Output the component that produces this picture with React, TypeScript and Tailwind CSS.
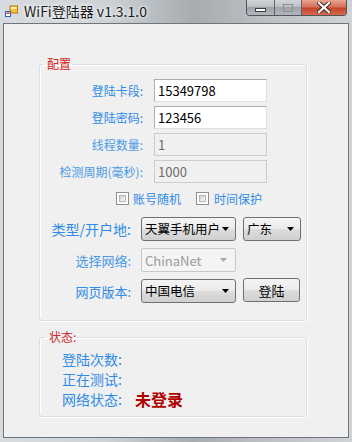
import React from "react";

function TextBox({ value, disabled }: { value: string; disabled?: boolean }) {
  return (
    <div
      className={
        disabled
          ? "ml-[11px] w-[113px] h-[23px] border border-[#c9ccd1] bg-[#f0f0f0] flex items-center pl-[3px] text-[13px] leading-none text-[#6d6d6d]"
          : "ml-[11px] w-[113px] h-[23px] border border-[#abadb3] border-b-[#dbdfe6] border-r-[#dbdfe6] bg-white flex items-center pl-[3px] text-[13px] leading-none text-black"
      }
    >
      {value}
    </div>
  );
}

function Arrow({ color }: { color: string }) {
  return (
    <svg width="7" height="4" viewBox="0 0 7 4" className="shrink-0">
      <path d="M0 0H7L3.5 4Z" fill={color} />
    </svg>
  );
}

function Combo({ text, cls, disabled }: { text: string; cls: string; disabled?: boolean }) {
  return (
    <div
      className={
        cls +
        (disabled
          ? " h-[24px] border border-[#c6c9cc] rounded-[2px] bg-[#f4f4f4] flex items-center justify-between pl-[3px] pr-[8px] text-[13px] leading-none text-[#9a9a9a]"
          : " h-[24px] border border-[#707070] rounded-[3px] bg-[linear-gradient(to_bottom,#f4f4f4_0%,#ebebeb_48%,#dddddd_52%,#d0d0d0_100%)] flex items-center justify-between pl-[3px] pr-[6px] text-[12.5px] leading-none text-black")
      }
    >
      <span className="whitespace-nowrap">{text}</span>
      <Arrow color={disabled ? "#a8a8a8" : "#000"} />
    </div>
  );
}

function CheckBox() {
  return (
    <div className="w-[13px] h-[13px] border border-[#8e8f8f] bg-white p-[2px]">
      <div className="w-full h-full border border-[#aeb3b9] bg-[linear-gradient(135deg,#cfd3d8,#f7f7f7)]" />
    </div>
  );
}

export default function App() {
  return (
    <div className="w-[352px] h-[442px] overflow-hidden flex flex-col bg-[linear-gradient(to_right,#d7dce1_0%,#cdd2d7_30%,#a7acb1_55%,#b9bdc1_72%,#cfd3d7_100%)] font-['Noto_Sans_CJK_SC',sans-serif]">
      {/* Title bar */}
      <div className="h-[23px] flex items-start shrink-0">
        <div className="mt-[5px] ml-[5px]">
          <svg width="13" height="13" viewBox="0 0 13 13">
            <rect x="5" y="1" width="7.5" height="7" fill="#f7c431" stroke="#c07a10" strokeWidth="1" />
            <rect x="6" y="2" width="5.5" height="2" fill="#fff3c0" />
            <rect x="0.5" y="6.5" width="5" height="5" fill="#ffffff" stroke="#3060c0" strokeWidth="1" />
            <rect x="1.5" y="7.5" width="3" height="1.5" fill="#d03020" />
          </svg>
        </div>
        <div className="ml-[6px] mt-[3px] text-[14px] leading-[17px] font-normal text-[#1a1a1a] [text-shadow:0_0_6px_#ffffff,0_0_3px_#ffffff]">
          WiFi登陆器 v1.3.1.0
        </div>
        <div className="ml-auto mr-[5px] flex h-[16px] rounded-b-[4px] border border-t-0 border-[#4e555c] overflow-hidden">
          <div className="w-[28px] h-full bg-[linear-gradient(to_bottom,#d3d6d9_0%,#b9bdc1_50%,#9ea3a8_50%,#b4b8bc_100%)] border-r border-[#5e646a] flex items-center justify-center">
            <div className="w-[11px] h-[4px] mt-[4px] bg-white border border-[#3a3f44]" />
          </div>
          <div className="w-[27px] h-full bg-[linear-gradient(to_bottom,#d3d6d9_0%,#b9bdc1_50%,#9ea3a8_50%,#b4b8bc_100%)] border-r border-[#5e646a] flex items-center justify-center">
            <div className="w-[10px] h-[8px] border border-[#8a9096] bg-transparent" />
          </div>
          <div className="w-[44px] h-full bg-[linear-gradient(to_bottom,#e9a593_0%,#d7705a_45%,#c3452c_55%,#d66a4c_100%)] flex items-center justify-center">
            <svg width="14" height="11" viewBox="0 0 14 11">
              <path d="M2 1L12 10M12 1L2 10" stroke="#3a2a26" strokeWidth="4" strokeLinecap="square" />
              <path d="M2 1L12 10M12 1L2 10" stroke="#ffffff" strokeWidth="2.2" strokeLinecap="square" />
            </svg>
          </div>
        </div>
      </div>

      {/* Client area */}
      <div className="mx-[3px] h-[415px] shrink-0 border border-[#6f757b] bg-[#f0f0f0] flex flex-col">
        {/* 配置 group */}
        <fieldset className="ml-[35px] mt-[32px] w-[268px] p-0 m-0 border border-[#d5dfe5] rounded-[3px] shadow-[inset_1px_1px_0_#ffffff,1px_1px_0_#ffffff]">
          <legend className="ml-[3px] pl-[4px] pr-[1px] text-[12px] leading-[16px] text-[#d42424]">配置</legend>
          <div className="pt-[7px] pb-[17px] flex flex-col">
            <div className="flex items-center h-[23px]">
              <div className="w-[103px] text-right text-[12px] leading-none text-[#2f8be6]">登陆卡段:</div>
              <TextBox value="15349798" />
            </div>
            <div className="flex items-center h-[23px] mt-[4px]">
              <div className="w-[103px] text-right text-[12px] leading-none text-[#2f8be6]">登陆密码:</div>
              <TextBox value="123456" />
            </div>
            <div className="flex items-center h-[23px] mt-[4px]">
              <div className="w-[103px] text-right text-[12px] leading-none text-[#4a9ae6]">线程数量:</div>
              <TextBox value="1" disabled />
            </div>
            <div className="flex items-center h-[23px] mt-[4px]">
              <div className="w-[103px] text-right text-[12px] leading-none text-[#4a9ae6] whitespace-nowrap">检测周期(毫秒):</div>
              <TextBox value="1000" disabled />
            </div>
            <div className="flex items-center h-[13px] mt-[9px]">
              <div className="ml-[76px]">
                <CheckBox />
              </div>
              <div className="ml-[4px] text-[12px] leading-none text-[#2f8be6]">账号随机</div>
              <div className="ml-[15px]">
                <CheckBox />
              </div>
              <div className="ml-[5px] text-[12px] leading-none text-[#2f8be6]">时间保护</div>
            </div>
            <div className="flex items-center h-[24px] mt-[12px]">
              <div className="w-[91px] text-right text-[14px] leading-none text-[#2f8be6] whitespace-nowrap">类型/开户地:</div>
              <Combo cls="ml-[10px] w-[95px]" text="天翼手机用户" />
              <Combo cls="ml-[7px] w-[58px]" text="广东" />
            </div>
            <div className="flex items-center h-[24px] mt-[7px]">
              <div className="w-[91px] text-right text-[13px] leading-none text-[#4a9ae6]">选择网络:</div>
              <Combo cls="ml-[10px] w-[95px]" text="ChinaNet" disabled />
            </div>
            <div className="flex items-center h-[24px] mt-[7px]">
              <div className="w-[91px] text-right text-[13px] leading-none text-[#2f8be6]">网页版本:</div>
              <Combo cls="ml-[10px] w-[95px]" text="中国电信" />
              <div className="ml-[7px] w-[57px] h-[24px] -mt-[2px] border border-[#707070] rounded-[3px] bg-[linear-gradient(to_bottom,#f4f4f4_0%,#ebebeb_48%,#dddddd_52%,#d0d0d0_100%)] flex items-center justify-center text-[13px] leading-none text-black">
                登陆
              </div>
            </div>
          </div>
        </fieldset>

        {/* 状态 group */}
        <fieldset className="ml-[35px] mt-[8px] w-[268px] p-0 m-0 border border-[#d5dfe5] rounded-[3px] shadow-[inset_1px_1px_0_#ffffff,1px_1px_0_#ffffff]">
          <legend className="ml-[5px] pl-[4px] pr-[1px] text-[12px] leading-[16px] text-[#cc2a2a]">状态:</legend>
          <div className="pt-[4px] pb-[7px] pl-[22px] flex flex-col">
            <div className="h-[20px] flex items-center text-[14px] leading-none text-[#2f8be6]">登陆次数:</div>
            <div className="h-[20px] flex items-center text-[14px] leading-none text-[#2f8be6]">正在测试:</div>
            <div className="h-[20px] flex items-center">
              <span className="text-[14px] leading-none text-[#2f8be6]">网络状态:</span>
              <span className="ml-[13px] text-[16px] leading-none font-bold text-[#b00000]">未登录</span>
            </div>
          </div>
        </fieldset>
      </div>
    </div>
  );
}
